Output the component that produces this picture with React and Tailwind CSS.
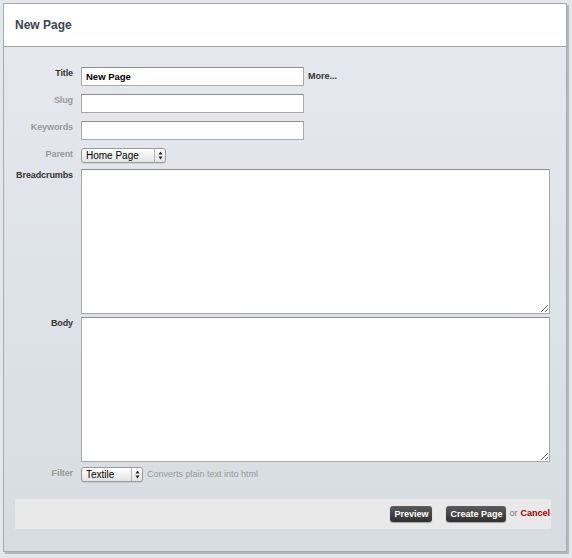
import React from 'react'

const font = { fontFamily: '"Liberation Sans", Arial, sans-serif' }

const Label = ({ text, dim }) => (
  <div
    className={`w-[69px] shrink-0 text-right text-[9px] font-bold leading-[11px] pt-[1px] tracking-[-0.1px] ${dim ? 'text-[#999999]' : 'text-[#333333]'}`}
  >
    {text}
  </div>
)

const TextInput = ({ value }) => (
  <input
    defaultValue={value}
    className="w-[223px] h-[19px] bg-white border border-[#a9a9a9] border-t-[#8e8e8e] px-[4px] text-[9.5px] font-bold text-black outline-none"
    style={font}
  />
)

const FakeSelect = ({ value, width }) => (
  <div
    className={`${width} h-[15px] flex items-stretch border border-[#9a9a9a] rounded-[3px] bg-gradient-to-b from-white to-[#e4e4e4] shadow-[0_1px_0_rgba(0,0,0,0.08)]`}
  >
    <div className="flex-1 pl-[4px] text-[10px] leading-[13px] text-black">{value}</div>
    <div className="w-[11px] border-l border-[#b5b5b5] flex items-center justify-center">
      <svg width="5" height="9" viewBox="0 0 5 9">
        <path d="M2.5 0.5 L4.5 3.5 L0.5 3.5 Z" fill="#222" />
        <path d="M2.5 8.5 L4.5 5.5 L0.5 5.5 Z" fill="#222" />
      </svg>
    </div>
  </div>
)

const DarkButton = ({ text }) => (
  <button className="h-[16px] px-[4px] rounded-[3px] bg-gradient-to-b from-[#5c5c5c] to-[#303030] text-white text-[9px] font-bold leading-[16px] shadow-[0_1px_1px_rgba(0,0,0,0.3)]">
    {text}
  </button>
)

export default function App() {
  return (
    <div className="w-[572px] h-[558px] bg-[#e5e8eb] pt-[3px] pl-[3px]" style={font}>
      <div className="w-[564px] h-[549px] flex flex-col border border-[#a6abb0] shadow-[2px_2px_0_#b4b8bc]">
        {/* Header */}
        <div className="h-[43px] shrink-0 bg-white border-b border-[#9ca2a8] flex items-center pl-[11px]">
          <h1 className="text-[12px] font-bold text-[#3c4350]">New Page</h1>
        </div>

        {/* Form */}
        <div className="flex-1 bg-gradient-to-b from-[#e5e9ed] to-[#d7dce0] pt-[20px] flex flex-col">
          <div className="flex gap-[8px] items-start">
            <Label text="Title" />
            <TextInput value="New Page" />
            <span className="text-[9px] font-bold text-[#333333] leading-[19px] ml-[-4px]">More...</span>
          </div>

          <div className="flex gap-[8px] items-start mt-[8px]">
            <Label text="Slug" dim />
            <TextInput value="" />
          </div>

          <div className="flex gap-[8px] items-start mt-[8px]">
            <Label text="Keywords" dim />
            <TextInput value="" />
          </div>

          <div className="flex gap-[8px] items-start mt-[8px]">
            <Label text="Parent" dim />
            <FakeSelect value="Home Page" width="w-[85px]" />
          </div>

          <div className="flex gap-[8px] items-start mt-[6px]">
            <Label text="Breadcrumbs" />
            <textarea className="w-[469px] h-[145px] bg-white border border-[#a9a9a9] border-t-[#8e8e8e] outline-none block" />
          </div>

          <div className="flex gap-[8px] items-start mt-[3px]">
            <Label text="Body" />
            <textarea className="w-[469px] h-[145px] bg-white border border-[#a9a9a9] border-t-[#8e8e8e] outline-none block" />
          </div>

          <div className="flex gap-[8px] items-start mt-[5px]">
            <Label text="Filter" dim />
            <div className="flex items-center gap-[4px]">
              <FakeSelect value="Textile" width="w-[62px]" />
              <span className="text-[9px] text-[#999999]">Converts plain text into html</span>
            </div>
          </div>

          {/* Buttons */}
          <div className="mt-[17px] ml-[11px] w-[536px] h-[30px] bg-[#e9e9e9] flex items-center justify-end pr-[1px]">
            <DarkButton text="Preview" />
            <div className="w-[14px]" />
            <DarkButton text="Create Page" />
            <span className="text-[9px] text-[#777777] mx-[3px]">or</span>
            <a className="text-[9px] font-bold text-[#990000]">Cancel</a>
          </div>
        </div>
      </div>
    </div>
  )
}
